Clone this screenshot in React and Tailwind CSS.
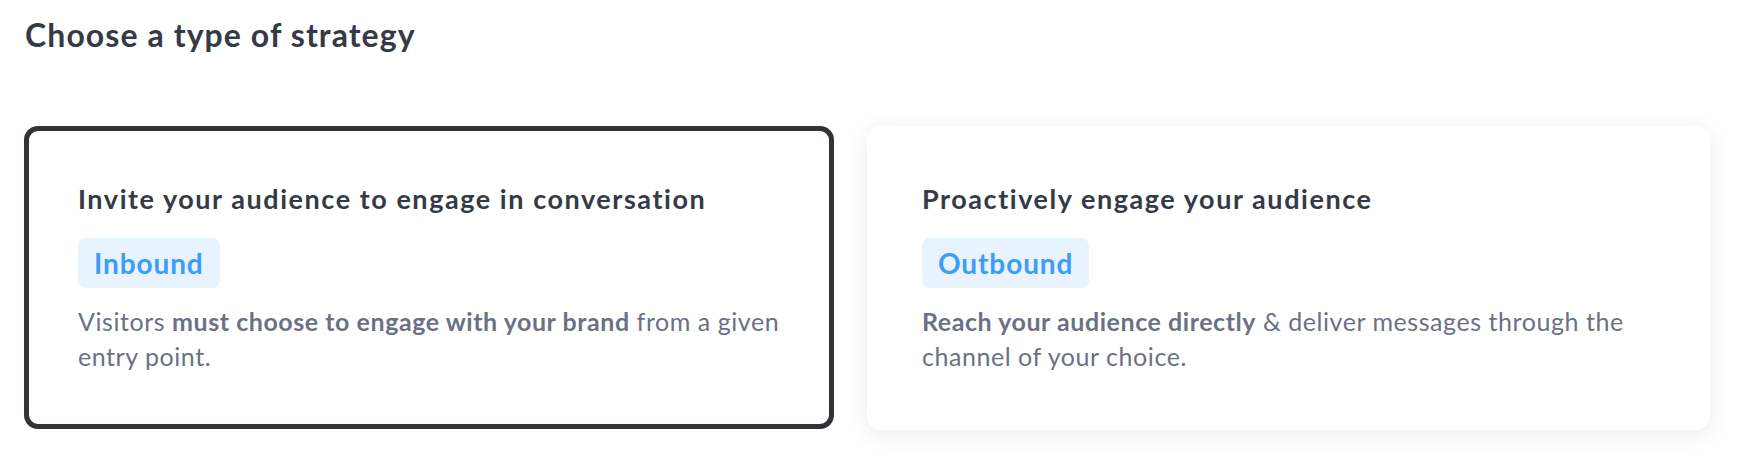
import React from "react";

export default function App() {
  return (
    <div
      className="w-[1738px] h-[468px] bg-white overflow-hidden"
      style={{ fontFamily: "Lato, 'Open Sans', sans-serif" }}
    >
      <h1 className="pl-[25px] pt-[15px] text-[32px] leading-[40px] font-bold tracking-[1.08px] text-[#353a47]">
        Choose a type of strategy
      </h1>
      <div className="flex gap-[33px] pl-[24px] mt-[71px]">
        <div className="w-[810px] h-[303px] rounded-[14px] border-[5px] border-[#303338] bg-white pl-[49px] pt-[52px]">
          <div className="text-[27px] leading-[32px] font-bold tracking-[1.55px] text-[#353a47] whitespace-nowrap">
            Invite your audience to engage in conversation
          </div>
          <div className="mt-[23px] inline-flex items-center h-[50px] px-[16px] rounded-[8px] bg-[#e7f3fe] text-[28px] font-bold tracking-[0.9px] text-[#3f9bfb]">
            Inbound
          </div>
          <p className="mt-[16px] text-[25px] leading-[35px] tracking-[0.55px] text-[#6b7185] whitespace-nowrap">
            Visitors <span className="font-bold">must choose to engage with your brand</span> from a given
            <br />
            entry point.
          </p>
        </div>
        <div className="w-[843px] h-[304px] rounded-[14px] bg-white pl-[55px] pt-[57px] shadow-[0_4px_22px_rgba(40,44,80,0.09)]">
          <div className="text-[27px] leading-[32px] font-bold tracking-[1.55px] text-[#353a47] whitespace-nowrap">
            Proactively engage your audience
          </div>
          <div className="mt-[23px] inline-flex items-center h-[50px] px-[16px] rounded-[8px] bg-[#e7f3fe] text-[28px] font-bold tracking-[0.9px] text-[#3f9bfb]">
            Outbound
          </div>
          <p className="mt-[16px] text-[25px] leading-[35px] tracking-[0.55px] text-[#6b7185] whitespace-nowrap">
            <span className="font-bold">Reach your audience directly</span> &amp; deliver messages through the
            <br />
            channel of your choice.
          </p>
        </div>
      </div>
    </div>
  );
}
